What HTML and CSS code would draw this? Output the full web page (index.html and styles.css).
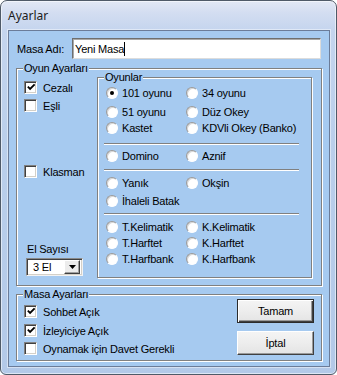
FILE: index.html
```html
<!DOCTYPE html>
<html lang="tr">
<head>
<meta charset="utf-8">
<title>Ayarlar</title>
<link rel="stylesheet" href="styles.css">
</head>
<body>
<div class="window">
  <div class="titlebar">Ayarlar</div>
  <div class="client">
    <div class="name-row">
      <span class="name-label">Masa Adı:</span>
      <div class="edit"><span>Yeni Masa</span><span class="caret"></span></div>
    </div>

    <div class="group game-group">
      <span class="caption">Oyun Ayarları</span>
      <div class="game-body">
        <div class="left-col">
          <div class="check cezali"><span class="box"><svg width="11" height="11" viewBox="0 0 11 11"><path d="M2 4.5 L4.5 7 L9.5 2" fill="none" stroke="#000" stroke-width="2"/></svg></span><span>Cezalı</span></div>
          <div class="check esli"><span class="box"></span><span>Eşli</span></div>
          <div class="check klasman"><span class="box"></span><span>Klasman</span></div>
          <div class="el-label">El Sayısı</div>
          <div class="combo"><span class="combo-text">3 El</span><span class="combo-btn"><svg width="7" height="4" viewBox="0 0 7 4"><path d="M0 0 H7 L3.5 4 Z" fill="#000"/></svg></span></div>
        </div>

        <div class="group games">
          <span class="caption">Oyunlar</span>
          <div class="rrow first">
            <span class="ritem"><span class="radio on"></span>101 oyunu</span>
            <span class="ritem"><span class="radio"></span>34 oyunu</span>
          </div>
          <div class="rrow g3">
            <span class="ritem"><span class="radio"></span>51 oyunu</span>
            <span class="ritem"><span class="radio"></span>Düz Okey</span>
          </div>
          <div class="rrow">
            <span class="ritem"><span class="radio"></span>Kastet</span>
            <span class="ritem"><span class="radio"></span>KDVli Okey (Banko)</span>
          </div>
          <div class="sep s1"></div>
          <div class="rrow g3">
            <span class="ritem"><span class="radio"></span>Domino</span>
            <span class="ritem"><span class="radio"></span>Aznif</span>
          </div>
          <div class="sep s2"></div>
          <div class="rrow g4">
            <span class="ritem"><span class="radio"></span>Yanık</span>
            <span class="ritem"><span class="radio"></span>Okşin</span>
          </div>
          <div class="rrow g2">
            <span class="ritem"><span class="radio"></span>İhaleli Batak</span>
          </div>
          <div class="sep s3"></div>
          <div class="rrow g4">
            <span class="ritem"><span class="radio"></span>T.Kelimatik</span>
            <span class="ritem"><span class="radio"></span>K.Kelimatik</span>
          </div>
          <div class="rrow">
            <span class="ritem"><span class="radio"></span>T.Harftet</span>
            <span class="ritem"><span class="radio"></span>K.Harftet</span>
          </div>
          <div class="rrow">
            <span class="ritem"><span class="radio"></span>T.Harfbank</span>
            <span class="ritem"><span class="radio"></span>K.Harfbank</span>
          </div>
        </div>
      </div>
    </div>

    <div class="group masa-group">
      <span class="caption">Masa Ayarları</span>
      <div class="masa-body">
        <div class="masa-checks">
          <div class="check m1"><span class="box"><svg width="11" height="11" viewBox="0 0 11 11"><path d="M2 4.5 L4.5 7 L9.5 2" fill="none" stroke="#000" stroke-width="2"/></svg></span><span>Sohbet Açık</span></div>
          <div class="check m2"><span class="box"><svg width="11" height="11" viewBox="0 0 11 11"><path d="M2 4.5 L4.5 7 L9.5 2" fill="none" stroke="#000" stroke-width="2"/></svg></span><span>İzleyiciye Açık</span></div>
          <div class="check m3"><span class="box"></span><span>Oynamak için Davet Gerekli</span></div>
        </div>
        <div class="buttons">
          <div class="btn default">Tamam</div>
          <div class="btn second">İptal</div>
        </div>
      </div>
    </div>
  </div>
</div>
</body>
</html>
```

FILE: styles.css
```css
* { box-sizing: border-box; }
html, body { margin: 0; padding: 0; }
body {
  width: 337px;
  height: 375px;
  overflow: hidden;
  background: #ffffff;
  font-family: "Liberation Sans", Arial, sans-serif;
  font-size: 11px;
  letter-spacing: -0.2px;
  color: #000;
}
.window {
  width: 337px;
  height: 375px;
  border: 1px solid #4f5a68;
  border-radius: 7px 7px 6px 6px;
  background: linear-gradient(180deg, #e2e8f5 0px, #d3ddf1 12px, #c5d5ee 29px, #bacfeb 140px, #b3c9e8 375px);
  box-shadow: inset 0 0 0 1px rgba(255,255,255,0.55);
  padding: 0 6px 7px 7px;
  display: flex;
  flex-direction: column;
}
.titlebar {
  flex: none;
  height: 29px;
  line-height: 29px;
  font-family: "Noto Sans", "Open Sans", sans-serif;
  font-size: 12px;
  letter-spacing: 0;
  color: #1c1c1c;
}
.client {
  flex: 1;
  border: 1px solid #6b7c99;
  box-shadow: 0 0 0 1px rgba(255,255,255,0.45);
  background: #a6caf0;
  padding-top: 7px;
  display: flex;
  flex-direction: column;
}
.name-row {
  display: grid;
  grid-template-columns: 63px 249px;
  height: 21px;
  align-items: center;
}
.name-label { padding-left: 8px; }
.edit {
  height: 21px;
  background: #fff;
  border: 1px solid;
  border-color: #6f6f6f #dcdcdc #dcdcdc #6f6f6f;
  box-shadow: inset 1px 1px 0 #a9a9a9;
  padding-left: 2px;
  display: flex;
  align-items: center;
}
.caret {
  display: inline-block;
  width: 1px;
  height: 14px;
  background: #000;
}

.group {
  border: 1px solid #808080;
  box-shadow: inset 1px 1px 0 #fff, 1px 1px 0 #fff;
  display: flex;
  flex-direction: column;
}
.caption {
  align-self: flex-start;
  height: 13px;
  line-height: 13px;
  margin: -7px 0 -6px 6px;
  padding: 0 1px;
  background: #a6caf0;
}
.game-group {
  margin: 9px 0 0 7px;
  width: 306px;
  height: 218px;
  flex: none;
}
.game-body { display: flex; }
.left-col {
  width: 80px;
  padding-left: 7px;
  display: flex;
  flex-direction: column;
}
.check {
  display: flex;
  align-items: center;
  gap: 6px;
  height: 13px;
  white-space: nowrap;
}
.box {
  flex: none;
  width: 13px;
  height: 13px;
  background: #fff;
  border: 1px solid;
  border-color: #808080 #ffffff #ffffff #808080;
  box-shadow: inset 1px 1px 0 #404040, inset -1px -1px 0 #d4d0c8;
  display: flex;
  align-items: center;
  justify-content: center;
}
.box svg { display: block; margin-left: 1px; }
.cezali { margin-top: 12px; }
.esli { margin-top: 5px; }
.klasman { margin-top: 53px; }
.el-label {
  margin: 65px 0 0 3px;
  height: 13px;
  line-height: 13px;
}
.combo {
  margin: 2px 0 0 2px;
  width: 57px;
  height: 18px;
  background: #fff;
  border: 1px solid;
  border-color: #8a8a8a #f2f2f2 #f2f2f2 #8a8a8a;
  box-shadow: inset 1px 1px 0 #404040, inset -1px -1px 0 #d4d0c8;
  display: flex;
  align-items: center;
  padding: 0 2px 0 6px;
}
.combo-text { flex: 1; }
.combo-btn {
  width: 16px;
  height: 14px;
  background: #ececec;
  border: 1px solid;
  border-color: #ffffff #404040 #404040 #ffffff;
  box-shadow: inset -1px -1px 0 #a0a0a0;
  display: flex;
  align-items: center;
  justify-content: center;
}
.combo-btn svg { display: block; }

.games {
  margin-top: 8px;
  width: 215px;
  height: 201px;
}
.rrow {
  display: grid;
  grid-template-columns: 80px auto;
  height: 16px;
  padding-left: 8px;
}
.rrow.first { margin-top: 7px; }
.rrow.g2 { margin-top: 2px; }
.rrow.g3 { margin-top: 3px; }
.rrow.g4 { margin-top: 4px; }
.ritem {
  display: flex;
  align-items: center;
  gap: 4px;
  white-space: nowrap;
}
.radio {
  flex: none;
  width: 12px;
  height: 12px;
  border-radius: 50%;
  background: #fff;
  border: 1px solid;
  border-color: #9a9a9a #ffffff #ffffff #9a9a9a;
  box-shadow: inset 1px 1px 0 #d8d8d8;
  display: flex;
  align-items: center;
  justify-content: center;
}
.radio.on::after {
  content: "";
  width: 4px;
  height: 4px;
  border-radius: 50%;
  background: #000;
}
.sep {
  margin-left: 6px;
  width: 195px;
  height: 2px;
  border-top: 1px solid #808080;
  border-bottom: 1px solid #ffffff;
}
.sep.s1 { margin-top: 7px; }
.sep.s2 { margin-top: 5px; }
.sep.s3 { margin-top: 4px; }

.masa-group {
  margin: 8px 0 0 7px;
  width: 306px;
  height: 67px;
  flex: none;
}
.masa-body { display: flex; }
.masa-checks {
  padding-left: 7px;
  display: flex;
  flex-direction: column;
}
.m1 { margin-top: 10px; }
.m2 { margin-top: 6px; }
.m3 { margin-top: 5px; }
.buttons {
  margin-left: auto;
  padding-right: 7px;
  display: flex;
  flex-direction: column;
}
.btn {
  width: 77px;
  height: 24px;
  display: flex;
  align-items: center;
  justify-content: center;
  background: linear-gradient(180deg, #f4f4f4 0%, #ededed 50%, #e4e4e4 100%);
  border: 1px solid;
}
.btn.default {
  margin-top: 4px;
  border-color: #2b2b2b;
  box-shadow: inset 1px 1px 0 #ffffff, inset -1px -1px 0 #404040, inset -2px -2px 0 #9a9a9a;
}
.btn.second {
  margin-top: 8px;
  border-color: #ffffff #404040 #404040 #ffffff;
  box-shadow: inset -1px -1px 0 #9a9a9a;
}
```
